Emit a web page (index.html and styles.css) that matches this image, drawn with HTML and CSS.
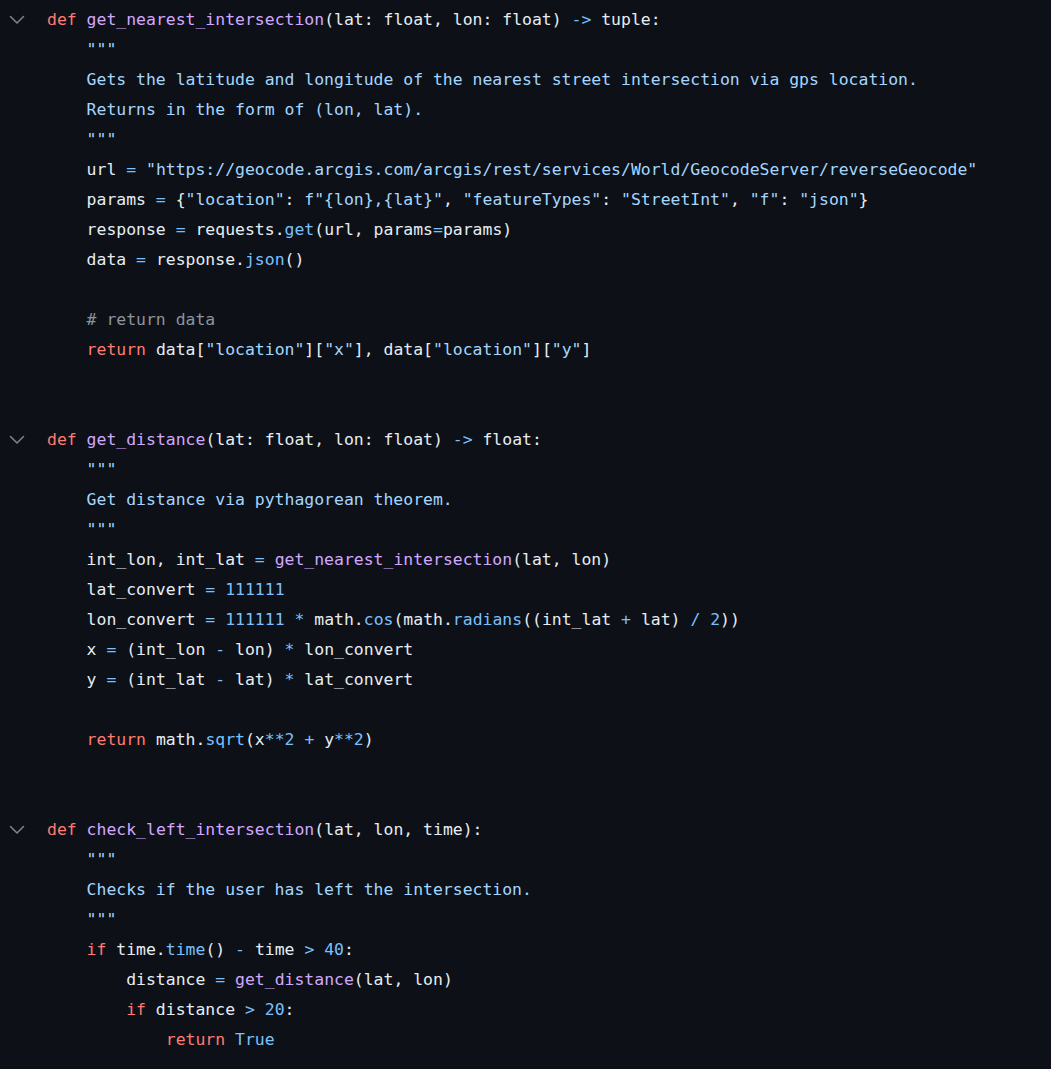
FILE: index.html
```html
<!DOCTYPE html>
<html>
<head>
<meta charset="utf-8">
<link rel="stylesheet" href="styles.css">
</head>
<body>
<div class="code">
<div class="line"><span class="gutter"><svg class="chev" width="16" height="10" viewBox="0 0 16 10"><polyline points="1.5,1.5 8,8 14.5,1.5" /></svg></span><span class="text"><span class="k">def</span> <span class="fn">get_nearest_intersection</span>(lat: float, lon: float) <span class="o">-&gt;</span> tuple:</span></div>
<div class="line"><span class="gutter"></span><span class="text">    <span class="s">"""</span></span></div>
<div class="line"><span class="gutter"></span><span class="text"><span class="s">    Gets the latitude and longitude of the nearest street intersection via gps location.</span></span></div>
<div class="line"><span class="gutter"></span><span class="text"><span class="s">    Returns in the form of (lon, lat).</span></span></div>
<div class="line"><span class="gutter"></span><span class="text">    <span class="s">"""</span></span></div>
<div class="line"><span class="gutter"></span><span class="text">    url <span class="o">=</span> <span class="s">"https://geocode.arcgis.com/arcgis/rest/services/World/GeocodeServer/reverseGeocode"</span></span></div>
<div class="line"><span class="gutter"></span><span class="text">    params <span class="o">=</span> {<span class="s">"location"</span>: <span class="s">f"{lon},{lat}"</span>, <span class="s">"featureTypes"</span>: <span class="s">"StreetInt"</span>, <span class="s">"f"</span>: <span class="s">"json"</span>}</span></div>
<div class="line"><span class="gutter"></span><span class="text">    response <span class="o">=</span> requests.<span class="o">get</span>(url, params<span class="o">=</span>params)</span></div>
<div class="line"><span class="gutter"></span><span class="text">    data <span class="o">=</span> response.<span class="o">json</span>()</span></div>
<div class="line"><span class="gutter"></span><span class="text"></span></div>
<div class="line"><span class="gutter"></span><span class="text">    <span class="cm"># return data</span></span></div>
<div class="line"><span class="gutter"></span><span class="text">    <span class="k">return</span> data[<span class="s">"location"</span>][<span class="s">"x"</span>], data[<span class="s">"location"</span>][<span class="s">"y"</span>]</span></div>
<div class="line"><span class="gutter"></span><span class="text"></span></div>
<div class="line"><span class="gutter"></span><span class="text"></span></div>
<div class="line"><span class="gutter"><svg class="chev" width="16" height="10" viewBox="0 0 16 10"><polyline points="1.5,1.5 8,8 14.5,1.5" /></svg></span><span class="text"><span class="k">def</span> <span class="fn">get_distance</span>(lat: float, lon: float) <span class="o">-&gt;</span> float:</span></div>
<div class="line"><span class="gutter"></span><span class="text">    <span class="s">"""</span></span></div>
<div class="line"><span class="gutter"></span><span class="text"><span class="s">    Get distance via pythagorean theorem.</span></span></div>
<div class="line"><span class="gutter"></span><span class="text">    <span class="s">"""</span></span></div>
<div class="line"><span class="gutter"></span><span class="text">    int_lon, int_lat <span class="o">=</span> <span class="fn">get_nearest_intersection</span>(lat, lon)</span></div>
<div class="line"><span class="gutter"></span><span class="text">    lat_convert <span class="o">=</span> <span class="o">111111</span></span></div>
<div class="line"><span class="gutter"></span><span class="text">    lon_convert <span class="o">=</span> <span class="o">111111</span> <span class="o">*</span> math.<span class="o">cos</span>(math.<span class="o">radians</span>((int_lat <span class="o">+</span> lat) <span class="o">/</span> <span class="o">2</span>))</span></div>
<div class="line"><span class="gutter"></span><span class="text">    x <span class="o">=</span> (int_lon <span class="o">-</span> lon) <span class="o">*</span> lon_convert</span></div>
<div class="line"><span class="gutter"></span><span class="text">    y <span class="o">=</span> (int_lat <span class="o">-</span> lat) <span class="o">*</span> lat_convert</span></div>
<div class="line"><span class="gutter"></span><span class="text"></span></div>
<div class="line"><span class="gutter"></span><span class="text">    <span class="k">return</span> math.<span class="o">sqrt</span>(x<span class="o">**2</span> <span class="o">+</span> y<span class="o">**2</span>)</span></div>
<div class="line"><span class="gutter"></span><span class="text"></span></div>
<div class="line"><span class="gutter"></span><span class="text"></span></div>
<div class="line"><span class="gutter"><svg class="chev" width="16" height="10" viewBox="0 0 16 10"><polyline points="1.5,1.5 8,8 14.5,1.5" /></svg></span><span class="text"><span class="k">def</span> <span class="fn">check_left_intersection</span>(lat, lon, time):</span></div>
<div class="line"><span class="gutter"></span><span class="text">    <span class="s">"""</span></span></div>
<div class="line"><span class="gutter"></span><span class="text"><span class="s">    Checks if the user has left the intersection.</span></span></div>
<div class="line"><span class="gutter"></span><span class="text">    <span class="s">"""</span></span></div>
<div class="line"><span class="gutter"></span><span class="text">    <span class="k">if</span> time.<span class="o">time</span>() <span class="o">-</span> time <span class="o">&gt;</span> <span class="o">40</span>:</span></div>
<div class="line"><span class="gutter"></span><span class="text">        distance <span class="o">=</span> <span class="fn">get_distance</span>(lat, lon)</span></div>
<div class="line"><span class="gutter"></span><span class="text">        <span class="k">if</span> distance <span class="o">&gt;</span> <span class="o">20</span>:</span></div>
<div class="line"><span class="gutter"></span><span class="text">            <span class="k">return</span> <span class="o">True</span></span></div>
</div>
</body>
</html>
```

FILE: styles.css
```css
html, body {
  margin: 0;
  padding: 0;
  background: #0d1117;
}

.code {
  padding-top: 5px;
  font-family: "DejaVu Sans Mono", "Liberation Mono", monospace;
  font-size: 16.45px;
  color: #e6edf3;
}

.line {
  display: flex;
  align-items: center;
  height: 30px;
  line-height: 30px;
}

.gutter {
  flex: none;
  width: 47px;
  height: 30px;
  display: flex;
  align-items: center;
  padding-left: 9px;
  box-sizing: border-box;
}

.chev {
  display: block;
  margin-top: 0;
}

.chev polyline {
  fill: none;
  stroke: #7d8590;
  stroke-width: 1.5;
  stroke-linecap: round;
  stroke-linejoin: round;
}

.text {
  white-space: pre;
}

.k { color: #ff7b72; }
.fn { color: #d2a8ff; }
.s { color: #a5d6ff; }
.o { color: #79c0ff; }
.cm { color: #8b949e; }
```
